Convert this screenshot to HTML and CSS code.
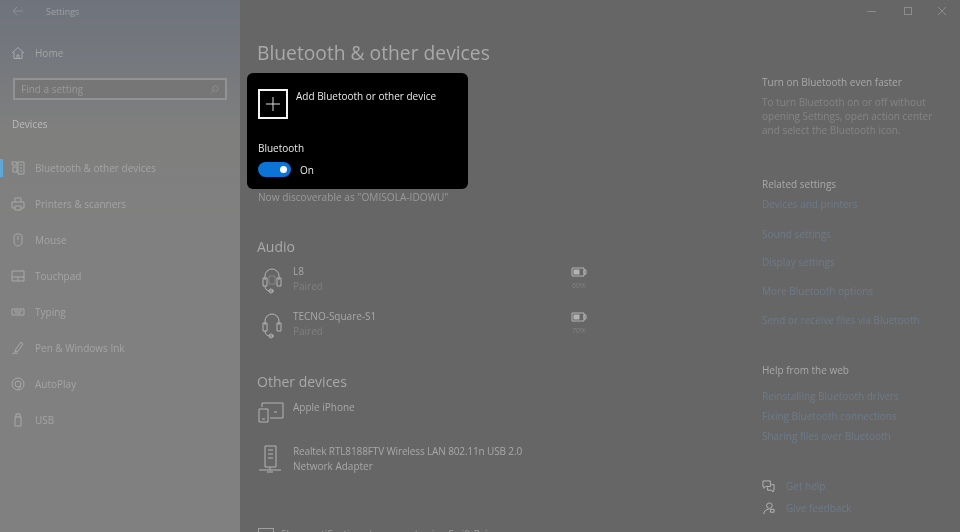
FILE: index.html
```html
<!DOCTYPE html>
<html lang="en">
<head>
<meta charset="utf-8">
<title>Settings</title>
<link rel="stylesheet" href="styles.css">
</head>
<body>
<div class="window">
  <aside class="sidebar">
    <div class="titlebar">
      <svg class="back" viewBox="0 0 12 10"><path d="M11 5H1M5 1 1 5l4 4"/></svg>
      <span>Settings</span>
    </div>
    <div class="nav-row home">
      <svg class="nav-icon" viewBox="0 0 14 14"><path d="M1 7 7 1.500 13 7M3 6v6.500h8V6M6 12.500V9h2v3.500"/></svg>
      <span>Home</span>
    </div>
    <div class="search">
      <span>Find a setting</span>
      <svg viewBox="0 0 10 10"><circle cx="6" cy="4" r="3"/><path d="M4 6 1 9"/></svg>
    </div>
    <div class="group">Devices</div>
    <nav class="nav">
      <div class="nav-row current">
        <svg class="nav-icon" viewBox="0 0 14 14"><path d="M1 1h5v3H1zM7 1h6v12H7zM2 6h4v5H2zM9 4h2M9 7h2M9 10h2"/></svg>
        <span>Bluetooth &amp; other devices</span>
      </div>
      <div class="nav-row">
        <svg class="nav-icon" viewBox="0 0 14 14"><path d="M4 5V1h6v4M1 5h12v6h-3M4 11H1V5M4 9h6v4H4z"/></svg>
        <span>Printers &amp; scanners</span>
      </div>
      <div class="nav-row">
        <svg class="nav-icon" viewBox="0 0 14 14"><path d="M3 3c0-1 1-2 4-2s4 1 4 2v6c0 2-2 4-4 4s-4-2-4-4zM7 3v4"/></svg>
        <span>Mouse</span>
      </div>
      <div class="nav-row">
        <svg class="nav-icon" viewBox="0 0 14 14"><path d="M1 2h12v10H1zM1 8h12M7 8v4"/></svg>
        <span>Touchpad</span>
      </div>
      <div class="nav-row">
        <svg class="nav-icon" viewBox="0 0 14 14"><path d="M1 4h12v6H1zM3 6h8M4 8h6"/></svg>
        <span>Typing</span>
      </div>
      <div class="nav-row">
        <svg class="nav-icon" viewBox="0 0 14 14"><path d="M10 1 5 8l-1 3 3-1 5-7zM1 13c2-2 4 0 6-1"/></svg>
        <span>Pen &amp; Windows Ink</span>
      </div>
      <div class="nav-row">
        <svg class="nav-icon" viewBox="0 0 14 14"><circle cx="7" cy="7" r="6"/><circle cx="7" cy="7" r="3"/><path d="M7 13l3-4"/></svg>
        <span>AutoPlay</span>
      </div>
      <div class="nav-row">
        <svg class="nav-icon" viewBox="0 0 14 14"><path d="M4 4h6v9H4zM5 4V1h4v3"/></svg>
        <span>USB</span>
      </div>
    </nav>
  </aside>

  <main class="main">
    <div class="controls">
      <span class="ctl-min"></span>
      <span class="ctl-max"></span>
      <svg class="ctl-close" viewBox="0 0 8 8"><path d="M0 0 8 8M8 0 0 8"/></svg>
    </div>
    <div class="columns">
      <section class="content">
        <h1>Bluetooth &amp; other devices</h1>
        <div class="card">
          <div class="add">
            <span class="plus"><svg viewBox="0 0 14 14"><path d="M7 0v14M0 7h14"/></svg></span>
            <span class="soft">Add Bluetooth or other device</span>
          </div>
          <div class="bt-label soft">Bluetooth</div>
          <div class="toggle-row">
            <span class="toggle"><span class="knob"></span></span>
            <span class="soft">On</span>
          </div>
        </div>
        <p class="discover">Now discoverable as "OMISOLA-IDOWU"</p>

        <h2 class="audio-head">Audio</h2>
        <div class="device audio">
          <svg class="dev-icon" viewBox="0 0 20 28"><path d="M3 14V10a7 7 0 0 1 14 0v4M1 12h4v8H1zM15 12h4v8h-4zM3 20c0 3 2 5 5 5h4"/><path d="M7 10h6v8H7z" opacity=".4"/><circle cx="9" cy="25" r="2"/></svg>
          <div class="dev-text"><div class="dev-name">L8</div><div class="dev-sub">Paired</div></div>
          <div class="battery"><svg viewBox="0 0 16 10"><path d="M1 1h12v8H1zM13 3h2v4h-2z"/><path class="fill" d="M2.500 2.500h6v5h-6z"/></svg><span>60%</span></div>
        </div>
        <div class="device audio">
          <svg class="dev-icon" viewBox="0 0 20 28"><path d="M3 14V10a7 7 0 0 1 14 0v4M1 12h4v8H1zM15 12h4v8h-4zM3 20c0 3 2 5 5 5h4"/><circle cx="9" cy="25" r="2"/></svg>
          <div class="dev-text"><div class="dev-name">TECNO-Square-S1</div><div class="dev-sub">Paired</div></div>
          <div class="battery"><svg viewBox="0 0 16 10"><path d="M1 1h12v8H1zM13 3h2v4h-2z"/><path class="fill" d="M2.500 2.500h6v5h-6z"/></svg><span>70%</span></div>
        </div>

        <h2 class="other-head">Other devices</h2>
        <div class="device other">
          <svg class="dev-icon" viewBox="0 0 26 22"><path d="M4 6V2h21v15H12M1 8h9v13H1zM4 18h3M16 11h3"/></svg>
          <div class="dev-text"><div class="dev-name">Apple iPhone</div></div>
        </div>
        <div class="device other tall">
          <svg class="dev-icon" viewBox="0 0 24 28"><path d="M7 1h11v21H7zM10 5h5M10 9h5M10 13h5M1 25h22M12 22v3M9 27h6"/></svg>
          <div class="dev-text"><div class="dev-name tight">Realtek RTL8188FTV Wireless LAN 802.11n USB 2.0</div><div class="dev-name">Network Adapter</div></div>
        </div>
        <div class="check-row"><span class="check"></span><span>Show notifications to connect using Swift Pair</span></div>
      </section>

      <aside class="side">
        <h3>Turn on Bluetooth even faster</h3>
        <p class="tip">To turn Bluetooth on or off without opening Settings, open action center and select the Bluetooth icon.</p>
        <h3 class="related">Related settings</h3>
        <a class="link l1">Devices and printers</a>
        <a class="link l2">Sound settings</a>
        <a class="link l3">Display settings</a>
        <a class="link l4">More Bluetooth options</a>
        <a class="link l5">Send or receive files via Bluetooth</a>
        <h3 class="help">Help from the web</h3>
        <a class="link w1">Reinstalling Bluetooth drivers</a>
        <a class="link w2">Fixing Bluetooth connections</a>
        <a class="link w3">Sharing files over Bluetooth</a>
        <div class="assist first">
          <svg viewBox="0 0 14 14"><path d="M1 1h8v6H4L2 9V7H1zM10 5h3v6h-1v2l-2-2H6V8"/></svg>
          <a class="link">Get help</a>
        </div>
        <div class="assist">
          <svg viewBox="0 0 14 14"><path d="M2 13c0-3 2-5 5-5M5 4a3 3 0 1 0 6 0 3 3 0 0 0-6 0M9 8h4v3H9z"/></svg>
          <a class="link">Give feedback</a>
        </div>
      </aside>
    </div>
  </main>
</div>
</body>
</html>
```

FILE: styles.css
```css
* { box-sizing: border-box; }
html, body { margin: 0; height: 100%; }
body { overflow: hidden; background: #666; font-family: "Open Sans", "Noto Sans", sans-serif; font-size: 10px; }
svg { display: block; fill: none; stroke: currentColor; stroke-width: 1; }

.window { display: flex; width: 960px; height: 532px; overflow: hidden; }

.sidebar { flex: 0 0 240px; height: 532px; color: #a4a4a4; background: linear-gradient(180deg, #6f737c 0, #75787d 60px, #7f7f7e 130px, #808080 220px); }
.sidebar span { filter: blur(.4px); }
.sidebar svg { filter: blur(.3px); }
.titlebar { display: flex; align-items: center; height: 22px; padding-left: 12px; color: #9ca0a6; font-size: 9px; }
.back { width: 12px; height: 10px; margin-right: 22px; color: #8b8f96; }
.nav-row { display: flex; align-items: center; height: 36px; padding-left: 11px; font-size: 10px; }
.nav-icon { flex: none; width: 14px; height: 14px; margin-right: 10px; color: #a8a8a8; }
.home { margin-top: 13px; height: 36px; }
.search { display: flex; align-items: center; justify-content: space-between; width: 214px; height: 22px; margin: 7px 0 0 13px; padding: 0 6px; color: #999; background: #767676; border: 2px solid #929292; font-size: 10px; }
.search svg { width: 9px; height: 9px; color: #8f8f8f; }
.group { margin: 17px 0 0 12px; color: #bcbcbc; font-size: 10px; line-height: 14px; filter: blur(.3px); }
.nav { margin-top: 19px; }
.current { padding-left: 0; }
.current::before { content: ""; flex: none; width: 3px; height: 18px; margin-right: 8px; background: #5fa6d6; }

.main { flex: 1; min-width: 0; color: #a6a6a6; }
.controls { display: flex; align-items: center; justify-content: flex-end; height: 22px; padding-right: 14px; gap: 26px; color: #8c8c8c; }
.ctl-min { width: 9px; height: 1px; margin-right: 2px; background: currentColor; }
.ctl-max { width: 8px; height: 8px; border: 1px solid currentColor; }
.ctl-close { width: 8px; height: 8px; }

.columns { display: flex; }
.content { width: 522px; padding-left: 7px; }
.side { flex: 1; }

h1 { margin: 18px 0 0 10px; color: #a9a9a9; font-size: 19.250px; font-weight: 400; line-height: 26px; filter: blur(.2px); }

.card { width: 221px; height: 116px; margin-top: 7px; padding: 16px 11px 0; color: #e9e9e9; background: #000; border-radius: 6px; font-size: 10px; }
.soft { filter: blur(.15px); }
.add { display: flex; align-items: flex-start; gap: 8px; line-height: 14px; }
.plus { display: flex; align-items: center; justify-content: center; width: 30px; height: 30px; border: 2px solid #f4f4f4; }
.plus svg { width: 14px; height: 14px; color: #ddd; }
.bt-label { margin-top: 21px; line-height: 16px; }
.toggle-row { display: flex; align-items: center; gap: 9px; margin-top: 6px; }
.toggle { display: flex; align-items: center; justify-content: flex-end; width: 33px; height: 15px; padding-right: 4px; background: #0c74d6; border-radius: 8px; }
.knob { width: 7px; height: 7px; background: #fff; border-radius: 50%; }

.discover { margin: 0 0 0 11px; color: #9a9a9a; font-size: 10.150px; line-height: 16px; filter: blur(.35px); }

h2 { margin: 0 0 0 10px; color: #a9a9a9; font-size: 14px; font-weight: 400; line-height: 20px; filter: blur(.3px); }
.audio-head { margin-top: 32px; }
.other-head { margin-top: 25px; }

.device { display: flex; align-items: flex-start; margin-left: 11px; filter: blur(.35px); }
.dev-icon { flex: none; color: #b3b3b3; }
.dev-text { font-size: 10px; line-height: 15px; }
.dev-name { color: #a8a8a8; }
.dev-sub { color: #808080; }
.tight { letter-spacing: -.13px; }

.audio { height: 45px; padding-top: 9px; }
.audio .dev-icon { width: 20px; height: 28px; margin: 0 11px 0 4px; }
.audio .dev-text { width: 276px; margin-top: -2px; }
.battery { display: flex; flex-direction: column; align-items: center; width: 20px; margin-top: 1px; color: #828282; font-size: 7px; line-height: 10px; }
.battery svg { width: 16px; height: 10px; margin-bottom: 4px; color: #b3b3b3; }
.battery .fill { fill: #b3b3b3; stroke: none; }

.other { height: 48px; padding-top: 9px; }
.other .dev-icon { width: 26px; height: 22px; margin: 0 9px 0 0; }
.other .dev-text { margin-top: -1px; }
.other.tall { height: 88px; padding-top: 4px; }
.other.tall .dev-text { margin-top: 0; }
.other.tall .dev-icon { width: 24px; height: 28px; margin: 1px 11px 0 0; }

.check-row { display: flex; align-items: flex-start; gap: 7px; margin: 0 0 0 11px; color: #a0a0a0; font-size: 10px; line-height: 12px; filter: blur(.35px); }
.check { flex: none; width: 16px; height: 16px; border: 1px solid #a0a0a0; }

h3 { margin: 0; color: #a9a9a9; font-size: 10px; font-weight: 400; line-height: 14px; filter: blur(.3px); }
.side { padding: 53px 0 0 0; }
.tip { width: 185px; margin: 6px 0 0; color: #858585; font-size: 10px; line-height: 14px; filter: blur(.35px); }
.link { display: block; color: #6d7b89; font-size: 10px; line-height: 14px; filter: blur(.35px); }
.related { margin-top: 40px; }
.l1 { margin-top: 6px; }
.l2 { margin-top: 16px; }
.l3 { margin-top: 14px; }
.l4 { margin-top: 15px; }
.l5 { margin-top: 15px; }
.help { margin-top: 36px; }
.w1 { margin-top: 12px; }
.w2 { margin-top: 6px; }
.w3 { margin-top: 6px; }
.assist { display: flex; align-items: center; gap: 11px; color: #b8b8b8; height: 22px; }
.assist.first { margin-top: 32px; }
.assist svg { flex: none; width: 13px; height: 13px; filter: blur(.3px); }
```
